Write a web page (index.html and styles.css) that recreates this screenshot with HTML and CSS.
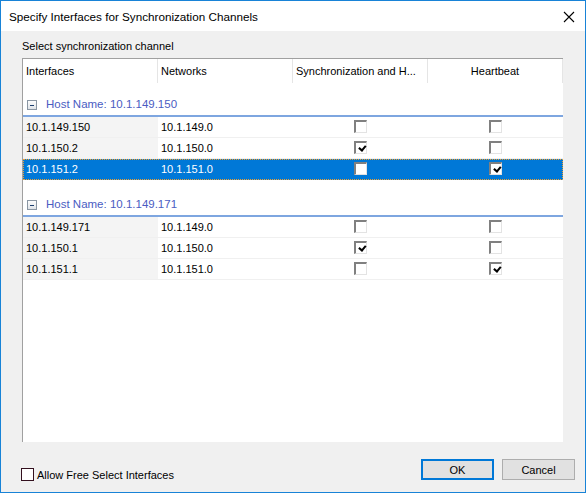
FILE: index.html
```html
<!DOCTYPE html>
<html>
<head>
<meta charset="utf-8">
<link rel="stylesheet" href="styles.css">
</head>
<body>
<div class="window">
  <div class="titlebar">
    <span class="title">Specify Interfaces for Synchronization Channels</span>
    <svg class="close" width="12" height="12" viewBox="0 0 12 12"><path d="M1 1 L11 11 M11 1 L1 11" stroke="#000" stroke-width="1.1" fill="none"/></svg>
  </div>
  <div class="content">
    <div class="label">Select synchronization channel</div>
    <div class="grid">
      <div class="head">
        <div class="hc">Interfaces</div>
        <div class="hc">Networks</div>
        <div class="hc">Synchronization and H...</div>
        <div class="hc center">Heartbeat</div>
      </div>
      <div class="group">
        <span class="minus"></span><span class="gtext">Host Name: 10.1.149.150</span>
      </div>
      <div class="row">
        <div class="c first">10.1.149.150</div><div class="c">10.1.149.0</div>
        <div class="c cb"><span class="chk"></span></div><div class="c cb"><span class="chk"></span></div>
      </div>
      <div class="row">
        <div class="c first">10.1.150.2</div><div class="c">10.1.150.0</div>
        <div class="c cb"><span class="chk on"></span></div><div class="c cb"><span class="chk"></span></div>
      </div>
      <div class="row sel">
        <div class="c first">10.1.151.2</div><div class="c">10.1.151.0</div>
        <div class="c cb"><span class="chk"></span></div><div class="c cb"><span class="chk on"></span></div>
      </div>
      <div class="group g2">
        <span class="minus"></span><span class="gtext">Host Name: 10.1.149.171</span>
      </div>
      <div class="row">
        <div class="c first">10.1.149.171</div><div class="c">10.1.149.0</div>
        <div class="c cb"><span class="chk"></span></div><div class="c cb"><span class="chk"></span></div>
      </div>
      <div class="row">
        <div class="c first">10.1.150.1</div><div class="c">10.1.150.0</div>
        <div class="c cb"><span class="chk on"></span></div><div class="c cb"><span class="chk"></span></div>
      </div>
      <div class="row">
        <div class="c first">10.1.151.1</div><div class="c">10.1.151.0</div>
        <div class="c cb"><span class="chk"></span></div><div class="c cb"><span class="chk on"></span></div>
      </div>
    </div>
    <div class="footer">
      <label class="free"><span class="fbox"></span>Allow Free Select Interfaces</label>
      <div class="buttons">
        <div class="btn ok">OK</div>
        <div class="btn">Cancel</div>
      </div>
    </div>
  </div>
</div>
</body>
</html>
```
FILE: styles.css
```css
html, body { margin: 0; padding: 0; }
body {
  font-family: "Liberation Sans", Arial, sans-serif;
  font-size: 11px;
  color: #000;
  background: #fff;
}
.window {
  width: 586px;
  height: 493px;
  box-sizing: border-box;
  border: 1px solid #1883d7;
  display: flex;
  flex-direction: column;
  background: #f0f0f0;
}
.titlebar {
  height: 30px;
  background: #fff;
  display: flex;
  align-items: center;
  justify-content: space-between;
  padding: 0 10px 0 8px;
  flex: none;
}
.title { font-size: 11.7px; padding-top: 1px; }
.close { display: block; margin-top: 1px; }
.content {
  flex: 1;
  display: flex;
  flex-direction: column;
  padding: 8px 0 0 21px;
}
.label { height: 19px; line-height: 15px; }
.grid {
  width: 540px;
  height: 383px;
  background: #fff;
  border-top: 1px solid #a0a0a0;
  border-left: 1px solid #a0a0a0;
  flex: none;
}
.head { display: flex; height: 24px; }
.hc {
  width: 135px;
  box-sizing: border-box;
  padding: 6px 0 0 3px;
  border-right: 1px solid #e5e5e5;
  white-space: nowrap;
  overflow: hidden;
}
.hc.center { text-align: center; padding-left: 0; }
.group {
  height: 34px;
  box-sizing: border-box;
  border-bottom: 2px solid #7ea6e0;
  display: flex;
  align-items: flex-end;
  padding: 0 0 3px 3px;
}
.g2 { height: 37px; }
.minus {
  width: 10px;
  height: 10px;
  box-sizing: border-box;
  border: 1px solid #8a96a3;
  background: linear-gradient(#fdfdfd, #dfe3e8);
  position: relative;
  margin: 0 9px 2px 1px;
}
.minus::after {
  content: "";
  position: absolute;
  left: 2px; right: 2px; top: 4px;
  height: 1px;
  background: #1c3f6e;
}
.gtext { color: #4a5cc2; line-height: 15px; font-size: 11.5px; }
.row { display: flex; height: 21px; }
.c {
  width: 135px;
  box-sizing: border-box;
  border-bottom: 1px solid #f0f0f0;
  padding: 4px 0 0 3px;
  white-space: nowrap;
}
.c.first { background: #f4f4f4; }
.c.cb { display: flex; justify-content: center; padding: 3px 0 0 0; }
.chk {
  width: 13px;
  height: 13px;
  box-sizing: border-box;
  border-style: solid;
  border-width: 2px 1px 1px 2px;
  border-color: #808080 #e3e3e3 #e3e3e3 #808080;
  background: #fff;
  position: relative;
}
.chk.on::after {
  content: "";
  position: absolute;
  left: 2px; top: 0px;
  width: 5px; height: 3px;
  border-left: 2px solid #000;
  border-bottom: 2px solid #000;
  transform: rotate(-50deg) translate(-1px, 2px);
}
.row.sel { background: #0078d7; outline: 1px dotted #f0a030; outline-offset: -1px; }
.row.sel .c { background: #0078d7; color: #fff; border-bottom-color: #0078d7; }
.footer {
  flex: 1;
  display: flex;
  justify-content: space-between;
  align-items: flex-start;
  padding: 17px 10px 0 0;
}
.free {
  display: flex;
  align-items: center;
  margin-top: 9px;
  margin-left: -1px;
}
.fbox {
  width: 13px;
  height: 13px;
  box-sizing: border-box;
  border: 1px solid #33101e;
  background: #fff;
  margin-right: 3px;
}
.buttons { display: flex; gap: 8px; }
.btn {
  width: 73px;
  height: 21px;
  box-sizing: border-box;
  border: 1px solid #adadad;
  background: #e1e1e1;
  display: flex;
  align-items: center;
  justify-content: center;
}
.btn.ok { border: 2px solid #0078d7; }
```
